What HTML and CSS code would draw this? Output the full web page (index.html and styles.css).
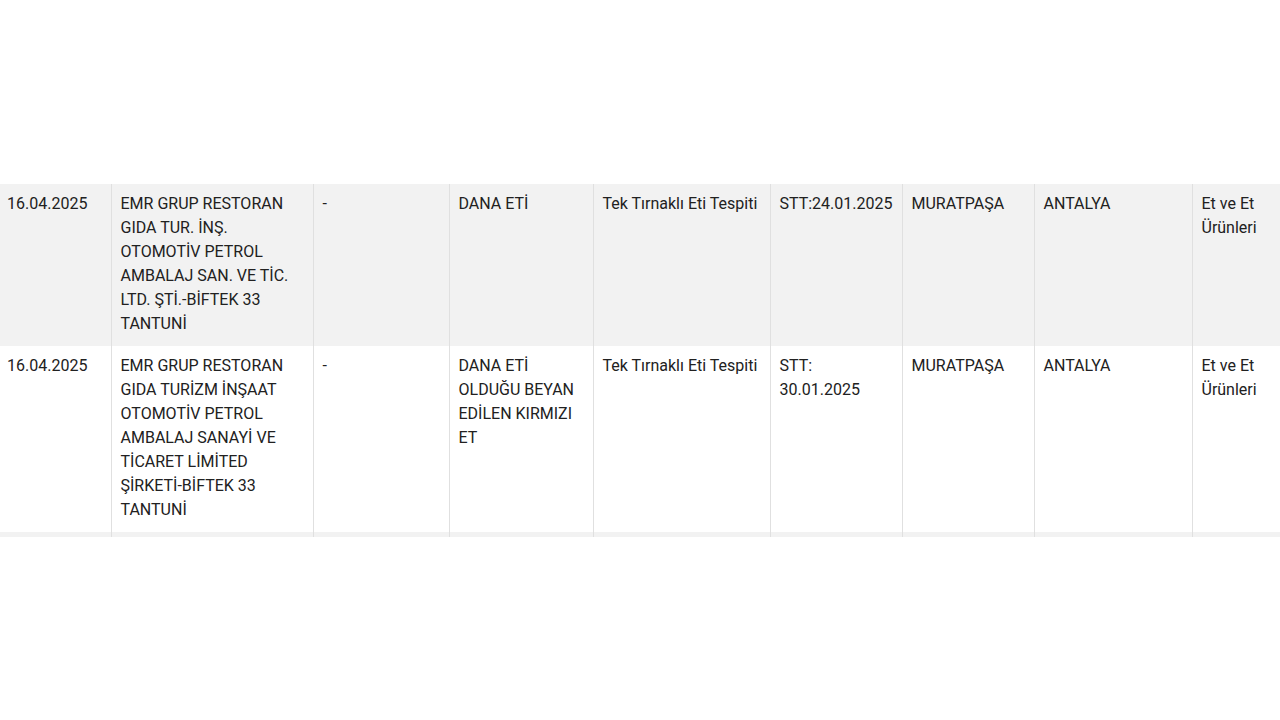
FILE: index.html
```html
<!DOCTYPE html>
<html lang="tr">
<head>
  <meta charset="UTF-8" />
  <meta name="viewport" content="width=device-width, initial-scale=1.0"/>
  <title>Taklit ve Tağşiş Listesi</title>
  <link rel="stylesheet" href="styles.css">
</head>
<body>
  <div class="table-wrap">
    <table class="list">
      <colgroup>
        <col class="c-date">
        <col class="c-firm">
        <col class="c-brand">
        <col class="c-product">
        <col class="c-reason">
        <col class="c-batch">
        <col class="c-district">
        <col class="c-city">
        <col class="c-group">
      </colgroup>
      <tbody>
        <tr>
          <td>16.04.2025</td>
          <td>EMR GRUP RESTORAN GIDA TUR. İNŞ. OTOMOTİV PETROL AMBALAJ SAN. VE TİC. LTD. ŞTİ.-BİFTEK 33 TANTUNİ</td>
          <td>-</td>
          <td>DANA ETİ</td>
          <td>Tek Tırnaklı Eti Tespiti</td>
          <td>STT:24.01.2025</td>
          <td>MURATPAŞA</td>
          <td>ANTALYA</td>
          <td>Et ve Et Ürünleri</td>
        </tr>
        <tr>
          <td>16.04.2025</td>
          <td>EMR GRUP RESTORAN GIDA TURİZM İNŞAAT OTOMOTİV PETROL AMBALAJ SANAYİ VE TİCARET LİMİTED ŞİRKETİ-BİFTEK 33 TANTUNİ</td>
          <td>-</td>
          <td>DANA ETİ OLDUĞU BEYAN EDİLEN KIRMIZI ET</td>
          <td>Tek Tırnaklı Eti Tespiti</td>
          <td>STT: 30.01.2025</td>
          <td>MURATPAŞA</td>
          <td>ANTALYA</td>
          <td>Et ve Et Ürünleri</td>
        </tr>
        <tr class="next">
          <td>&nbsp;</td>
          <td>&nbsp;</td>
          <td>&nbsp;</td>
          <td>&nbsp;</td>
          <td>&nbsp;</td>
          <td>&nbsp;</td>
          <td>&nbsp;</td>
          <td>&nbsp;</td>
          <td>&nbsp;</td>
        </tr>
      </tbody>
    </table>
  </div>
</body>
</html>
```

FILE: styles.css
```css
html, body {
  margin: 0;
  padding: 0;
  background: #fff;
  overflow: hidden;
}

body {
  font-family: Roboto, 'Liberation Sans', sans-serif;
  color: #212121;
}

.table-wrap {
  margin-top: 184px;
  height: 353px;
  overflow: hidden;
}

.list {
  border-collapse: collapse;
  table-layout: fixed;
  width: 1380px;
  font-size: 16px;
  line-height: 24px;
}

.c-date { width: 111px; }
.c-firm { width: 202px; }
.c-brand { width: 136px; }
.c-product { width: 144px; }
.c-reason { width: 177px; }
.c-batch { width: 132px; }
.c-district { width: 132px; }
.c-city { width: 158px; }
.c-group { width: 188px; }

.list td {
  vertical-align: top;
  padding: 8px 10px 10px 9px;
  border-left: 1px solid #e0e0e0;
}

.list td:first-child {
  border-left: none;
  padding-left: 7px;
}

.list td:last-child {
  padding-right: 90px;
}

.list tr:nth-child(odd) {
  background: #f2f2f2;
}

.list tr:nth-child(even) {
  background: #fff;
}
```
